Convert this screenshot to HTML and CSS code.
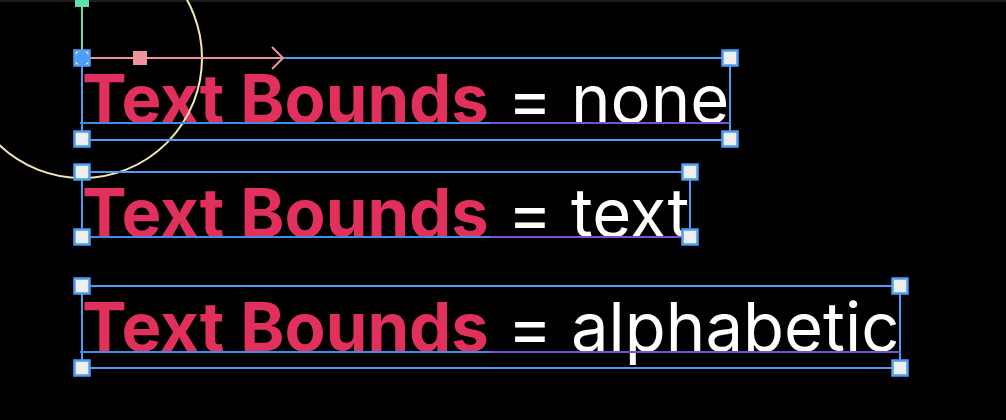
FILE: index.html
```html
<!DOCTYPE html>
<html>
<head>
<meta charset="utf-8">
<link rel="stylesheet" href="styles.css">
</head>
<body>
<div class="stage">
  <div class="topbar"></div>
  <div class="rows">
    <p class="row"><span class="key">Text Bounds</span> = none</p>
    <p class="row"><span class="key">Text Bounds</span> = text</p>
    <p class="row"><span class="key">Text Bounds</span> = alphabetic</p>
  </div>
  <svg class="overlay" width="1006" height="420" viewBox="0 0 1006 420">
    <!-- rotation / origin guide -->
    <circle class="ring" cx="82" cy="58" r="120"/>
    <line class="green" x1="82" y1="0" x2="82" y2="58"/>
    <rect class="green-fill" x="75" y="-7" width="14" height="14"/>

    <!-- row 1 -->
    <rect class="box" x="82" y="58" width="648" height="82"/>
    <line class="base-blue" x1="80" y1="123" x2="490" y2="123"/>
    <line class="base-purple" x1="490" y1="123" x2="730" y2="123"/>
    <line class="pink" x1="90" y1="58" x2="283" y2="58"/>
    <polyline class="pink" points="272,47 283,58 272,69"/>
    <rect class="pink-fill" x="133" y="51" width="14" height="14"/>
    <rect class="handle" x="74.5" y="50.5" width="15" height="15"/>
    <circle class="origin" cx="82" cy="58" r="7"/>
    <rect class="handle" x="722.5" y="50.5" width="15" height="15"/>
    <rect class="handle" x="74.5" y="131.5" width="15" height="15"/>
    <rect class="handle" x="722.5" y="131.5" width="15" height="15"/>

    <!-- row 2 -->
    <rect class="box" x="82" y="172" width="608" height="65"/>
    <line class="base-blue" x1="80" y1="237" x2="490" y2="237"/>
    <line class="base-purple" x1="490" y1="237" x2="690" y2="237"/>
    <rect class="handle" x="74.5" y="164.5" width="15" height="15"/>
    <rect class="handle" x="682.5" y="164.5" width="15" height="15"/>
    <rect class="handle" x="74.5" y="229.5" width="15" height="15"/>
    <rect class="handle" x="682.5" y="229.5" width="15" height="15"/>

    <!-- row 3 -->
    <rect class="box" x="82" y="286" width="818" height="82"/>
    <line class="base-blue" x1="80" y1="352" x2="490" y2="352"/>
    <line class="base-purple" x1="490" y1="352" x2="900" y2="352"/>
    <rect class="handle" x="74.5" y="278.5" width="15" height="15"/>
    <rect class="handle" x="892.5" y="278.5" width="15" height="15"/>
    <rect class="handle" x="74.5" y="360.5" width="15" height="15"/>
    <rect class="handle" x="892.5" y="360.5" width="15" height="15"/>
  </svg>
</div>
</body>
</html>
```

FILE: styles.css
```css
html, body {
  margin: 0;
  background: #000;
}

.stage {
  position: relative;
  width: 1006px;
  height: 420px;
  overflow: hidden;
  background: #000;
}

.topbar {
  height: 2px;
  background: #1c1c1c;
}

.rows {
  display: flex;
  flex-direction: column;
  gap: 32px;
  padding: 56px 0 0 82px;
}

.row {
  margin: 0;
  font-family: Inter, "Noto Sans", sans-serif;
  font-size: 67px;
  line-height: 82px;
  font-weight: 400;
  color: #ffffff;
  white-space: nowrap;
}

.key {
  font-weight: 700;
  color: #e0305b;
}

.overlay {
  position: absolute;
  left: 0;
  top: 0;
}

.ring {
  fill: none;
  stroke: #f3e7b3;
  stroke-width: 2;
}

.green {
  stroke: #5fe0a9;
  stroke-width: 2;
}

.green-fill {
  fill: #5fe0a9;
}

.box {
  fill: none;
  stroke: #4b9ef5;
  stroke-width: 2;
}

.base-blue {
  stroke: #3f8ee6;
  stroke-width: 2;
}

.base-purple {
  stroke: #7a4fd6;
  stroke-width: 2;
}

.pink {
  fill: none;
  stroke: #ef939a;
  stroke-width: 2;
}

.pink-fill {
  fill: #ef939a;
}

.handle {
  fill: #efefef;
  stroke: #4b9ef5;
  stroke-width: 2.5;
}

.origin {
  fill: #4d9ef6;
}
```
